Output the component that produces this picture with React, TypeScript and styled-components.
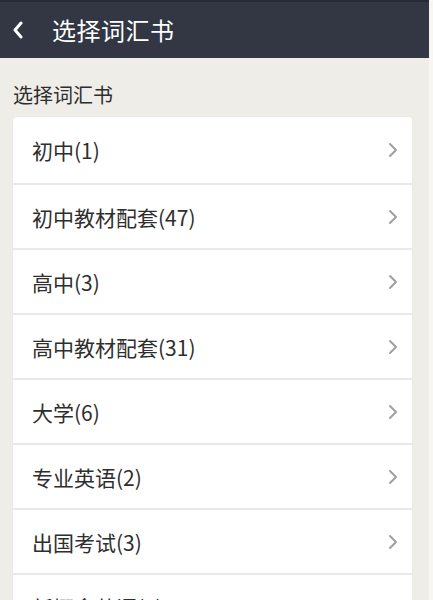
import React from 'react';
import styled, { createGlobalStyle } from 'styled-components';

const GlobalStyle = createGlobalStyle`
  html, body {
    margin: 0;
    padding: 0;
    background: #efede8;
    font-family: 'Noto Sans CJK SC', 'Noto Sans', sans-serif;
  }
`;

const Page = styled.div`
  width: 433px;
  height: 600px;
  overflow: hidden;
  background: #efede8;
  box-sizing: border-box;
  border-right: 4px solid #f7f6f3;
`;

const TopBar = styled.div`
  height: 58px;
  background: #323743;
  border-top: 2px solid #262a33;
  box-sizing: border-box;
  display: flex;
  align-items: center;
  padding-left: 12px;
  color: #ffffff;
`;

const BackButton = styled.div`
  width: 14px;
  height: 20px;
  display: flex;
  align-items: center;
  margin-right: 26px;
`;

const Title = styled.div`
  font-size: 24px;
  letter-spacing: 0.5px;
  line-height: 30px;
`;

const SectionLabel = styled.div`
  padding: 22px 0 0 13px;
  height: 37px;
  font-size: 20px;
  color: #2e2e2e;
  line-height: 30px;
`;

const Card = styled.div`
  margin: 0 17px 0 13px;
  background: #ffffff;
  border-radius: 3px;
  box-shadow: 0 0 1px rgba(0, 0, 0, 0.12);
`;

const Row = styled.div`
  height: 65px;
  box-sizing: border-box;
  display: flex;
  align-items: center;
  justify-content: space-between;
  padding: 0 14px 0 19px;
  border-top: 2px solid #ebe9e5;
  &:first-child {
    border-top: none;
    height: 66px;
  }
`;

const RowText = styled.span`
  font-size: 21px;
  color: #2e2e2e;
  line-height: 30px;
`;

const Chevron = ({ color, width }: { color: string; width: number }) => (
  <svg width="10" height="16" viewBox="0 0 10 16" fill="none">
    <path d="M2 2 L8 8 L2 14" stroke={color} strokeWidth={width} strokeLinecap="round" strokeLinejoin="round" />
  </svg>
);

const books = [
  '初中(1)',
  '初中教材配套(47)',
  '高中(3)',
  '高中教材配套(31)',
  '大学(6)',
  '专业英语(2)',
  '出国考试(3)',
  '新概念英语(4)',
];

const App = () => (
  <Page>
    <GlobalStyle />
    <TopBar>
      <BackButton>
        <svg width="12" height="18" viewBox="0 0 12 18" fill="none">
          <path d="M9 2 L3 9 L9 16" stroke="#ffffff" strokeWidth="3" strokeLinecap="round" strokeLinejoin="round" />
        </svg>
      </BackButton>
      <Title>选择词汇书</Title>
    </TopBar>
    <SectionLabel>选择词汇书</SectionLabel>
    <Card>
      {books.map((b) => (
        <Row key={b}>
          <RowText>{b}</RowText>
          <Chevron color="#a0a0a0" width={2} />
        </Row>
      ))}
    </Card>
  </Page>
);

export default App;
